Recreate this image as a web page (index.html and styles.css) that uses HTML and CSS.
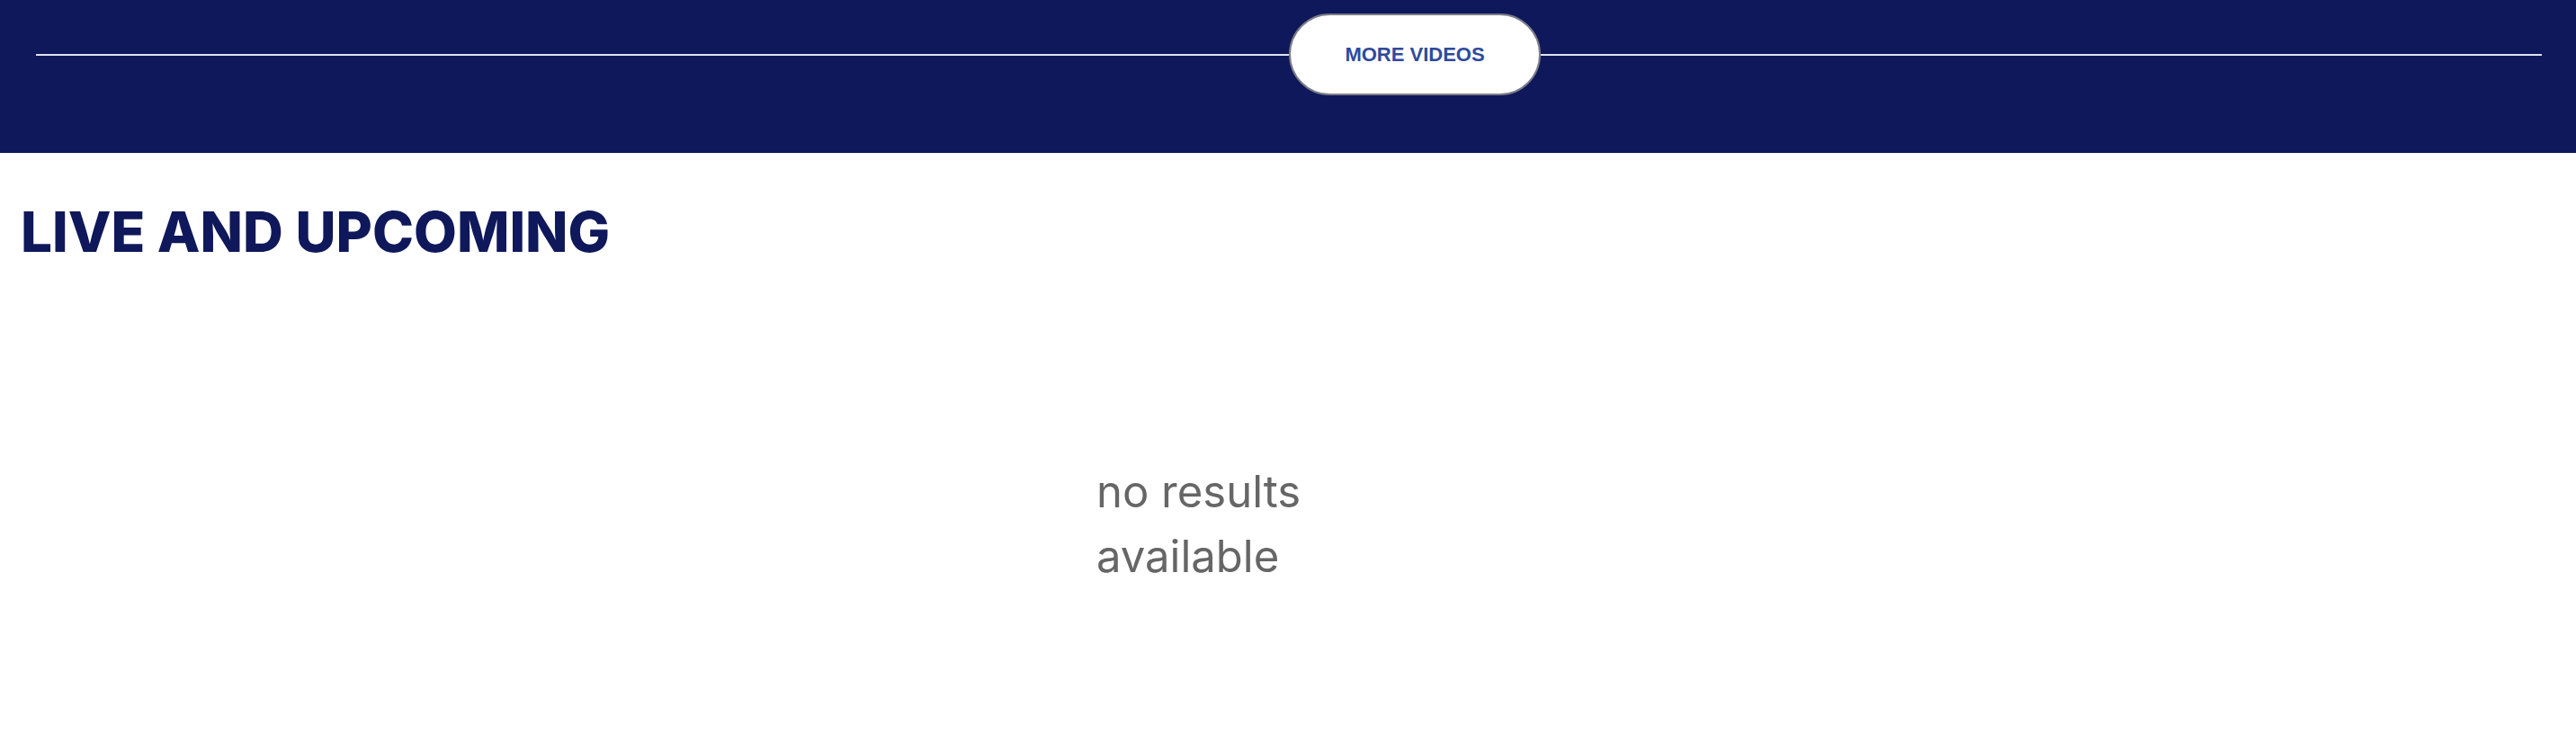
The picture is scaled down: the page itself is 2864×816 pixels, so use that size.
FILE: index.html
```html
<!DOCTYPE html>
<html lang="en">
<head>
<meta charset="utf-8">
<title>Live and Upcoming</title>
<link rel="stylesheet" href="styles.css">
</head>
<body>
<section class="band">
  <div class="more-row">
    <span class="rule rule-left"></span>
    <a class="more-btn" href="#">MORE VIDEOS</a>
    <span class="rule rule-right"></span>
  </div>
</section>
<section class="live">
  <h2 class="live-title">LIVE AND UPCOMING</h2>
  <div class="results">
    <p class="empty">no results available</p>
  </div>
</section>
</body>
</html>
```
FILE: styles.css
```css
html, body {
  margin: 0;
  padding: 0;
  background: #ffffff;
}
body {
  width: 2864px;
  height: 816px;
  overflow: hidden;
}
.band {
  background: #0f185a;
  height: 170px;
  box-sizing: border-box;
  padding: 15px 38px 0 40px;
}
.more-row {
  display: flex;
  align-items: center;
}
.rule {
  height: 2px;
  background: #dfe3f4;
}
.rule-left {
  flex: 1393 1 0;
}
.rule-right {
  flex: 1113 1 0;
}
.more-btn {
  box-sizing: border-box;
  width: 280px;
  height: 91px;
  border: 2px solid #7b7d88;
  border-radius: 46px;
  background: #ffffff;
  display: flex;
  align-items: center;
  justify-content: center;
  font-family: "Liberation Sans", Arial, sans-serif;
  font-weight: 700;
  font-size: 22px;
  color: #2e4a9c;
  text-decoration: none;
}
.live {
  padding: 57px 0 0 23px;
}
.live-title {
  margin: 0;
  font-family: Inter, "Noto Sans", sans-serif;
  font-weight: 800;
  font-size: 62px;
  line-height: 1;
  color: #0f185a;
}
.results {
  display: flex;
  justify-content: center;
  padding-top: 222px;
  padding-right: 23px;
}
.empty {
  margin: 0;
  width: 426px;
  font-family: Inter, "Noto Sans", sans-serif;
  font-weight: 400;
  font-size: 49px;
  line-height: 72px;
  color: #666666;
}
```
